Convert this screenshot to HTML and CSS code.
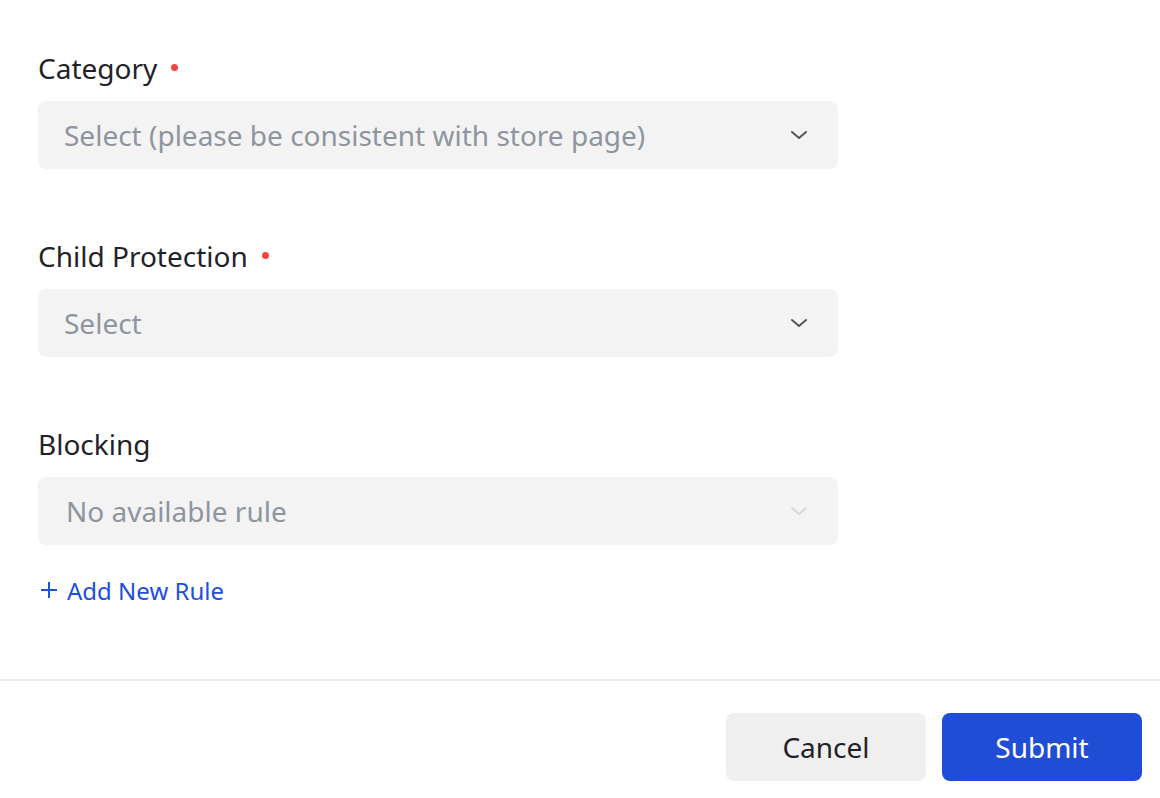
FILE: index.html
```html
<!DOCTYPE html>
<html lang="en">

<head>
    <meta charset="UTF-8">
    <meta name="viewport" content="width=device-width, initial-scale=1.0">
    <title>Content Settings</title>

    <link rel="stylesheet" href="styles.css">
</head>

<body>
    <form class="settings-form">
        <div class="form-body">
            <div class="field">
                <label class="field-label">Category <span class="required"></span></label>
                <div class="select">
                    <span class="select-value">Select (please be consistent with store page)</span>
                    <svg class="chevron" width="18" height="10" viewBox="0 0 18 10">
                        <path d="M2 2 L9 8 L16 2" fill="none" stroke="currentColor" stroke-width="2" stroke-linecap="round" stroke-linejoin="round" />
                    </svg>
                </div>
            </div>

            <div class="field">
                <label class="field-label">Child Protection <span class="required"></span></label>
                <div class="select">
                    <span class="select-value">Select</span>
                    <svg class="chevron" width="18" height="10" viewBox="0 0 18 10">
                        <path d="M2 2 L9 8 L16 2" fill="none" stroke="currentColor" stroke-width="2" stroke-linecap="round" stroke-linejoin="round" />
                    </svg>
                </div>
            </div>

            <div class="field field-last">
                <label class="field-label">Blocking</label>
                <div class="select select-disabled">
                    <span class="select-value">No available rule</span>
                    <svg class="chevron" width="18" height="10" viewBox="0 0 18 10">
                        <path d="M2 2 L9 8 L16 2" fill="none" stroke="currentColor" stroke-width="1.6" stroke-linecap="round" stroke-linejoin="round" />
                    </svg>
                </div>
                <a class="add-rule" href="#">
                    <svg width="18" height="18" viewBox="0 0 18 18">
                        <path d="M9 1 V17 M1 9 H17" stroke="currentColor" stroke-width="2" />
                    </svg>
                    Add New Rule
                </a>
            </div>
        </div>

        <div class="form-footer">
            <button type="button" class="btn btn-cancel">Cancel</button>
            <button type="submit" class="btn btn-submit">Submit</button>
        </div>
    </form>
</body>

</html>
```

FILE: styles.css
```css
body {
    margin: 0;
    padding: 0;
    background-color: #ffffff;
    font-family: "Noto Sans", "Open Sans", sans-serif;
    color: #1f2329;
}

.form-body {
    padding: 48px 38px 0 38px;
}

.field {
    width: 800px;
    margin-bottom: 67px;
}

.field-last {
    margin-bottom: 0;
}

.field-label {
    display: flex;
    align-items: center;
    height: 40px;
    font-size: 28px;
    color: #1f2329;
    margin-bottom: 13px;
}

.required {
    display: inline-block;
    width: 7px;
    height: 7px;
    border-radius: 50%;
    background-color: #f04642;
    margin-left: 14px;
    margin-bottom: 2px;
}

.select {
    display: flex;
    align-items: center;
    justify-content: space-between;
    height: 68px;
    padding: 0 30px 0 26px;
    background-color: #f3f3f4;
    border-radius: 8px;
    box-sizing: border-box;
}

.select-value {
    font-size: 28px;
    color: #8f959e;
}

.chevron {
    color: #51565d;
}

.select-disabled .select-value {
    padding-left: 2px;
}

.select-disabled .chevron {
    color: #cdd0d4;
}

.add-rule {
    display: flex;
    align-items: center;
    gap: 9px;
    height: 40px;
    margin-top: 25px;
    padding-left: 2px;
    font-size: 24px;
    color: #1e4fd8;
    text-decoration: none;
}

.form-footer {
    display: flex;
    justify-content: flex-end;
    gap: 16px;
    margin-top: 69px;
    padding: 32px 18px 0 0;
    border-top: 2px solid #ebebeb;
}

.btn {
    width: 200px;
    height: 68px;
    border: none;
    border-radius: 8px;
    font-family: inherit;
    font-size: 28px;
    cursor: pointer;
}

.btn-cancel {
    background-color: #efefef;
    color: #1f2329;
}

.btn-submit {
    background-color: #204dd6;
    color: #ffffff;
}
```
